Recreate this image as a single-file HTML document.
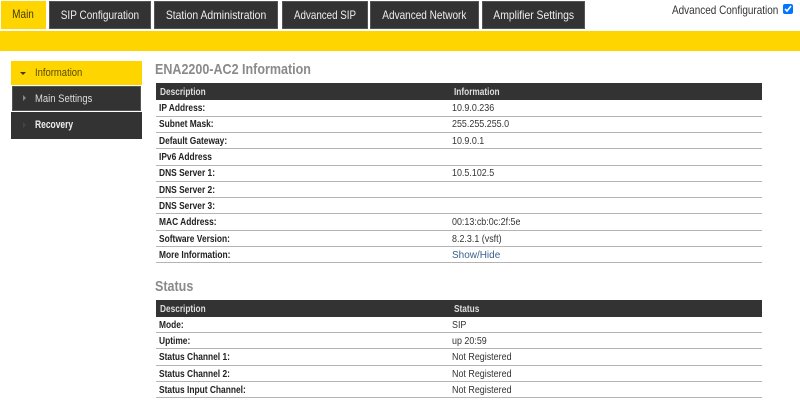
<!DOCTYPE html>
<html><head><meta charset="utf-8"><style>
html,body{margin:0;padding:0;background:#fff;width:800px;height:404px;overflow:hidden}
body{position:relative;font-family:"Liberation Sans",sans-serif;font-size:10px;color:#333}
#w{position:absolute;left:0;top:0;width:800px;height:404px;filter:blur(.3px)}
div{position:absolute;box-sizing:border-box;white-space:nowrap}
.tab{top:1px;height:28px;background:#333;border:1px solid #555;color:#eee;font-size:12px;line-height:27px;text-align:center}
.tab span{display:inline-block;transform:scaleX(.835)}
.bar{left:156px;width:606px;height:17px;background:#333;color:#ddd;font-weight:bold;font-size:10.5px;line-height:18px}
.bar span{position:absolute;transform:scaleX(.79);transform-origin:0 50%}
.t{left:159px;font-weight:bold;color:#222;font-size:10.5px;line-height:15px;transform:scaleX(.8);transform-origin:0 50%}
.v{left:452px;color:#333;font-size:10.5px;line-height:15px;transform:scaleX(.85);transform-origin:0 50%}
.l{left:156px;width:606px;height:1.4px;background:#b4b4b4}
h2{position:absolute;margin:0;font-size:15px;color:#8a8a8a;font-weight:bold;white-space:nowrap;transform:scaleX(.835);transform-origin:0 50%}
.m span{display:inline-block;transform-origin:0 50%}
</style></head><body><div id="w">
<div class="tab" style="left:1px;width:45px;background:#ffd500;border-color:#ffd500;color:#443a00;line-height:25px"><span>Main</span></div>
<div class="tab" style="left:49px;width:102px"><span>SIP Configuration</span></div>
<div class="tab" style="left:154px;width:124px"><span style="transform:scaleX(.865)">Station Administration</span></div>
<div class="tab" style="left:282px;width:86px"><span style="transform:scaleX(.815)">Advanced SIP</span></div>
<div class="tab" style="left:370px;width:109px"><span>Advanced Network</span></div>
<div class="tab" style="left:482px;width:103px"><span style="transform:scaleX(.865)">Amplifier Settings</span></div>
<div style="left:672px;top:3px;font-size:12px;color:#333;line-height:14px;transform:scaleX(.83);transform-origin:0 50%">Advanced Configuration</div>
<input type="checkbox" checked style="position:absolute;left:783px;top:4px;margin:0;width:10px;height:10px">
<div style="left:0;top:31px;width:800px;height:20px;background:#ffd500"></div>

<div class="m" style="left:11px;top:61px;width:131px;height:24px;background:#ffd500;color:#554a00;font-size:11px;line-height:24px;padding-left:24px"><span style="transform:scaleX(.86)">Information</span></div>
<div style="left:20px;top:72px;border-left:3px solid transparent;border-right:3px solid transparent;border-top:3px solid #443a00"></div>
<div class="m" style="left:12px;top:86px;width:129px;height:25px;background:#333;border:1px solid #555;color:#ddd;font-size:11px;line-height:24px;padding-left:22px"><span style="transform:scaleX(.86)">Main Settings</span></div>
<div style="left:23px;top:95px;border-top:3px solid transparent;border-bottom:3px solid transparent;border-left:3px solid #888"></div>
<div class="m" style="left:11px;top:112px;width:131px;height:27px;background:#333;color:#eee;font-size:11px;font-weight:bold;line-height:27px;padding-left:24px"><span style="transform:scaleX(.77)">Recovery</span></div>
<div style="left:23px;top:122px;border-top:3px solid transparent;border-bottom:3px solid transparent;border-left:3px solid #444"></div>

<h2 style="left:155px;top:61px">ENA2200-AC2 Information</h2>
<div class="bar" style="top:83px"><span style="left:4px">Description</span><span style="left:298px">Information</span></div>
<div class="t" style="top:101px">IP Address:</div><div class="v" style="top:101px">10.9.0.236</div><div class="l" style="top:116px"></div>
<div class="t" style="top:117px">Subnet Mask:</div><div class="v" style="top:117px">255.255.255.0</div><div class="l" style="top:132px"></div>
<div class="t" style="top:134px">Default Gateway:</div><div class="v" style="top:134px">10.9.0.1</div><div class="l" style="top:148px"></div>
<div class="t" style="top:150px">IPv6 Address</div><div class="l" style="top:165px"></div>
<div class="t" style="top:166px">DNS Server 1:</div><div class="v" style="top:166px">10.5.102.5</div><div class="l" style="top:181px"></div>
<div class="t" style="top:183px">DNS Server 2:</div><div class="l" style="top:197px"></div>
<div class="t" style="top:199px">DNS Server 3:</div><div class="l" style="top:213px"></div>
<div class="t" style="top:215px">MAC Address:</div><div class="v" style="top:215px">00:13:cb:0c:2f:5e</div><div class="l" style="top:230px"></div>
<div class="t" style="top:232px">Software Version:</div><div class="v" style="top:232px">8.2.3.1 (vsft)</div><div class="l" style="top:246px"></div>
<div class="t" style="top:248px">More Information:</div><div class="v" style="top:248px;color:#39608a;transform:scaleX(.95)">Show/Hide</div><div class="l" style="top:262px"></div>

<h2 style="left:155px;top:278px">Status</h2>
<div class="bar" style="top:300px"><span style="left:4px">Description</span><span style="left:298px">Status</span></div>
<div class="t" style="top:318px">Mode:</div><div class="v" style="top:318px">SIP</div><div class="l" style="top:332px"></div>
<div class="t" style="top:334px">Uptime:</div><div class="v" style="top:334px">up 20:59</div><div class="l" style="top:348px"></div>
<div class="t" style="top:350px">Status Channel 1:</div><div class="v" style="top:350px">Not Registered</div><div class="l" style="top:365px"></div>
<div class="t" style="top:367px">Status Channel 2:</div><div class="v" style="top:367px">Not Registered</div><div class="l" style="top:381px"></div>
<div class="t" style="top:383px">Status Input Channel:</div><div class="v" style="top:383px">Not Registered</div><div class="l" style="top:397px"></div>
</div></body></html>
